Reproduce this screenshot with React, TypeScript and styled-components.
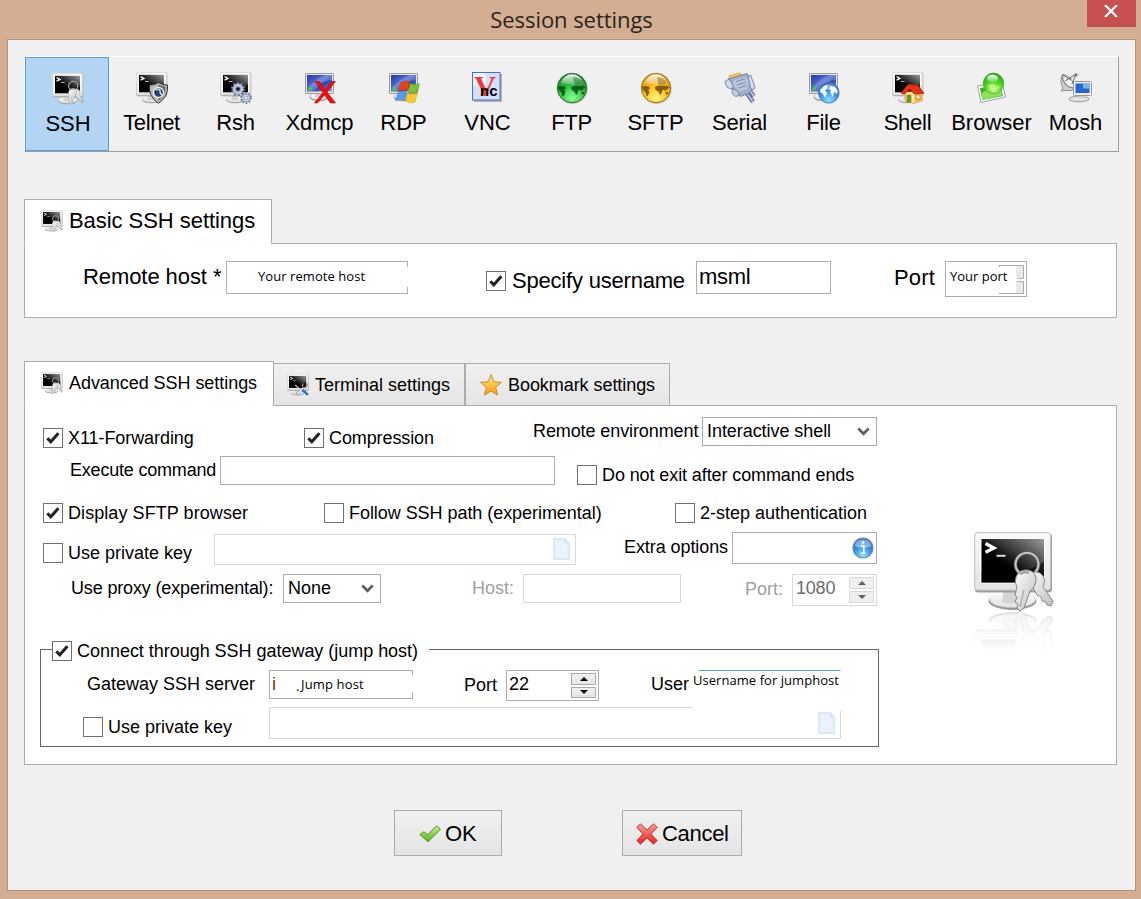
import React from "react";
import styled, { createGlobalStyle, css } from "styled-components";

const GlobalStyle = createGlobalStyle`
  * { box-sizing: border-box; }
  body { margin: 0; background: #d3ae92; }
`;

type Box = { $w?: number; $h?: number; $ml?: number; $mt?: number };

const box = css<Box>`
  flex: none;
  ${(p) => p.$w !== undefined && `width: ${p.$w}px;`}
  ${(p) => p.$h !== undefined && `height: ${p.$h}px;`}
  margin-left: ${(p) => p.$ml ?? 0}px;
  margin-top: ${(p) => p.$mt ?? 0}px;
`;

const Window = styled.div`
  width: 1141px;
  height: 899px;
  padding: 0 5px 8px 7px;
  background: #d3ae92;
  font-family: "Liberation Sans", Arial, sans-serif;
  font-size: 18px;
  color: #000;
  display: flex;
  flex-direction: column;
  overflow: hidden;
`;

const TitleBar = styled.header`
  height: 39px;
  display: flex;
  justify-content: flex-end;
  align-items: flex-start;
`;

const Title = styled.h1`
  margin: 0;
  flex: 1;
  padding-left: 49px;
  font: 400 22px/38px "Open Sans", "Noto Sans", sans-serif;
  letter-spacing: -0.05px;
  text-align: center;
  color: #2b2420;
`;

const CloseButton = styled.button`
  width: 49px;
  height: 27px;
  border: 0;
  padding: 0 2px 5px 0;
  background: #c75050;
  display: flex;
  align-items: center;
  justify-content: center;
`;

const Body = styled.main`
  flex: 1;
  padding: 16px;
  border: 1px solid #b5927a;
  background: #f0f0f0;
`;

const Toolbar = styled.nav`
  width: 1095px;
  height: 96px;
  display: flex;
  border: 1px solid #a0a0a0;
  border-top-color: #fff;
  border-left-color: #fff;
`;

const ToolButton = styled.button<{ $selected?: boolean; $ls?: number }>`
  flex: none;
  width: 84px;
  height: 94px;
  padding: ${(p) => (p.$selected ? "15px 0 0 2px" : "14px 0 0 1px")};
  border: 1px solid ${(p) => (p.$selected ? "#569de5" : "transparent")};
  background: ${(p) => (p.$selected ? "#b3d4f3" : "transparent")};
  display: flex;
  flex-direction: column;
  align-items: center;
  font: 400 22px/28px "Liberation Sans", Arial, sans-serif;
  letter-spacing: ${(p) => p.$ls ?? 0}px;
  color: #000;
  white-space: nowrap;
  svg { flex: none; margin-bottom: 5px; }
`;

const Tabs = styled.div<Box>`
  ${box}
  display: flex;
  align-items: flex-end;
  position: relative;
`;

const Tab = styled.div<Box & { $active?: boolean; $big?: boolean; $pad: string; $ls?: number }>`
  ${box}
  display: flex;
  align-items: flex-start;
  padding: ${(p) => p.$pad};
  border: 1px solid #acacac;
  background: linear-gradient(#f0f0f0, #e5e5e5);
  font-size: ${(p) => (p.$big ? 22 : 18)}px;
  line-height: 24px;
  letter-spacing: ${(p) => p.$ls ?? 0}px;
  white-space: nowrap;
  ${(p) => p.$active && "background: #fff; border-bottom-color: #fff;"}
  svg { flex: none; margin: 1px 6px 0 0; }
`;

const Panel = styled.section<{ $h: number }>`
  width: 1093px;
  height: ${(p) => p.$h}px;
  margin-top: -1px;
  border: 1px solid #acacac;
  background: #fff;
  display: flex;
`;

const Form = styled.div`
  width: 855px;
  flex: none;
`;

const Row = styled.div<Box>`
  ${box}
  display: flex;
  align-items: flex-start;
`;

const Label = styled.span<Box & { $big?: boolean; $ink?: string; $ls?: number }>`
  ${box}
  font-size: ${(p) => (p.$big ? 22 : 18)}px;
  line-height: 24px;
  letter-spacing: ${(p) => p.$ls ?? 0}px;
  color: ${(p) => p.$ink ?? "#000"};
  white-space: nowrap;
`;

const Field = styled.div<Box & { $tone?: "dim" | "hot"; $clear?: boolean }>`
  ${box}
  display: flex;
  align-items: flex-start;
  position: relative;
  border: 1px solid ${(p) => (p.$clear ? "transparent" : p.$tone === "dim" ? "#d9d9d9" : "#abadb3")};
  ${(p) => p.$tone === "hot" && "border-top-color: #569de5;"}
  background: ${(p) => (p.$clear ? "none" : "#fff")};
  white-space: nowrap;
`;

/* White strip that hides part of a field's outline */
const Patch = styled.i<{ $x: number; $y: number; $w: number; $h: number }>`
  position: absolute;
  left: ${(p) => p.$x}px;
  top: ${(p) => p.$y}px;
  width: ${(p) => p.$w}px;
  height: ${(p) => p.$h}px;
  background: #fff;
`;

const Note = styled.span<Box & { $ls?: number }>`
  ${box}
  position: relative;
  font: 400 13px/18px "Open Sans", "Noto Sans", sans-serif;
  letter-spacing: ${(p) => p.$ls ?? 0}px;
  white-space: nowrap;
`;

const Check = styled.span<Box>`
  ${box}
  width: 20px;
  height: 20px;
  border: 1px solid #707070;
  background: #fff;
  display: flex;
  svg { margin: -1px; }
`;

const Spin = styled.span<{ $off?: boolean }>`
  position: absolute;
  right: 2px;
  top: 2px;
  bottom: 2px;
  width: 25px;
  display: flex;
  flex-direction: column;
  gap: 2px;
  span {
    flex: 1;
    display: flex;
    align-items: center;
    justify-content: center;
    border: 1px solid ${(p) => (p.$off ? "#d9d9d9" : "#acacac")};
    background: ${(p) => (p.$off ? "#efefef" : "linear-gradient(#f0f0f0, #e5e5e5)")};
  }
`;

const Group = styled.div`
  width: 839px;
  height: 98px;
  margin: 13px 0 0 15px;
  border: 1px solid #646464;
`;

const Legend = styled.div`
  width: 377px;
  height: 24px;
  margin: -11px 0 0 11px;
  display: flex;
  background: linear-gradient(#fff, #fff) right / 357px 100% no-repeat;
`;

const Actions = styled.footer`
  display: flex;
  gap: 120px;
  margin: 45px 0 0 370px;
`;

const ActionButton = styled.button<{ $w: number; $pad: number; $ls?: number }>`
  width: ${(p) => p.$w}px;
  height: 46px;
  padding: 1px 0 0 ${(p) => p.$pad}px;
  display: flex;
  align-items: center;
  gap: 4px;
  border: 1px solid #acacac;
  background: linear-gradient(#f0f0f0, #e5e5e5);
  font: 400 22px/28px "Liberation Sans", Arial, sans-serif;
  letter-spacing: ${(p) => p.$ls ?? 0}px;
  color: #000;
`;

const Artwork = styled.div`
  margin: 126px 0 0 94px;
`;

const DefsHolder = styled.svg`
  position: absolute;
`;

/* ---------- drawings ---------- */

const SharedDefs = () => (
  <DefsHolder width="0" height="0">
    <defs>
      <linearGradient id="screenHi" x1="0" y1="1" x2="1" y2="0">
        <stop offset=".4" stopColor="#000" />
        <stop offset="1" stopColor="#9a9a9a" />
      </linearGradient>
      <linearGradient id="case" x1="0" y1="0" x2="0" y2="1">
        <stop offset="0" stopColor="#fafafa" />
        <stop offset="1" stopColor="#e2e2e2" />
      </linearGradient>
      <linearGradient id="metal" x1="0" y1="0" x2="1" y2="1">
        <stop offset="0" stopColor="#fff" />
        <stop offset="1" stopColor="#bdbdbd" />
      </linearGradient>
      <linearGradient id="blueScreen" x1="0" y1="0" x2="1" y2="1">
        <stop offset="0" stopColor="#2037a8" />
        <stop offset=".45" stopColor="#5a70cc" />
        <stop offset=".6" stopColor="#2b43a8" />
        <stop offset="1" stopColor="#8ea2e4" />
      </linearGradient>
      <radialGradient id="green" cx=".5" cy=".85" r=".8">
        <stop offset="0" stopColor="#8dff94" />
        <stop offset=".5" stopColor="#35c646" />
        <stop offset="1" stopColor="#12802a" />
      </radialGradient>
      <radialGradient id="gold" cx=".5" cy=".85" r=".8">
        <stop offset="0" stopColor="#fff27a" />
        <stop offset=".5" stopColor="#fdc22a" />
        <stop offset="1" stopColor="#dc9208" />
      </radialGradient>
      <radialGradient id="azure" cx=".5" cy=".85" r=".85">
        <stop offset="0" stopColor="#8fe0ff" />
        <stop offset=".5" stopColor="#3a93e2" />
        <stop offset="1" stopColor="#1c59ae" />
      </radialGradient>
      <radialGradient id="lime" cx=".5" cy=".85" r=".85">
        <stop offset="0" stopColor="#c4ff78" />
        <stop offset=".55" stopColor="#4ad322" />
        <stop offset="1" stopColor="#2ba01a" />
      </radialGradient>
      <linearGradient id="gloss" x1="0" y1="0" x2="0" y2="1">
        <stop offset="0" stopColor="#fff" stopOpacity=".95" />
        <stop offset="1" stopColor="#fff" stopOpacity=".2" />
      </linearGradient>
      <linearGradient id="starFill" x1="0" y1="0" x2="0" y2="1">
        <stop offset="0" stopColor="#ffe98a" />
        <stop offset="1" stopColor="#f99a08" />
      </linearGradient>
      <linearGradient id="okFill" x1="0" y1="0" x2="0" y2="1">
        <stop offset="0" stopColor="#c9f08a" />
        <stop offset="1" stopColor="#57b51c" />
      </linearGradient>
      <linearGradient id="noFill" x1="0" y1="0" x2="0" y2="1">
        <stop offset="0" stopColor="#ff9a94" />
        <stop offset="1" stopColor="#e62222" />
      </linearGradient>
      <linearGradient id="fade" x1="0" y1="0" x2="0" y2="1">
        <stop offset="0" stopColor="#fff" stopOpacity=".3" />
        <stop offset=".6" stopColor="#fff" stopOpacity=".08" />
        <stop offset="1" stopColor="#fff" stopOpacity="0" />
      </linearGradient>
      <mask id="fadeMask" maskUnits="userSpaceOnUse" x="0" y="79" width="84" height="42">
        <rect x="0" y="79" width="84" height="40" fill="url(#fade)" />
      </mask>
      <g id="terminal">
        <ellipse cx="38.5" cy="69" rx="24" ry="9" fill="#9c9c9c" />
        <ellipse cx="38.5" cy="67.5" rx="23" ry="8" fill="url(#case)" />
        <path d="M30 58h14l2 12q-9 3-18 0z" fill="#d4d4d4" />
        <rect x="1" y="1.5" width="77" height="59" rx="3.5" fill="#9d9d9d" />
        <rect x=".7" y=".7" width="76" height="57.5" rx="3" fill="url(#case)" stroke="#bdbdbd" />
        <rect x="6" y="6" width="65" height="45.500" fill="#fff" />
        <rect x="7.5" y="7" width="62.5" height="43.5" fill="url(#screenHi)" />
        <path d="M7.500 50.500V40Q50 44 70 30V50.500z" fill="#000" opacity=".6" />
        <path d="M11.500 11.500l8.500 4.500-8.500 4.300" fill="none" stroke="#fff" strokeWidth="3.200" />
        <path d="M22.500 23.800h9" stroke="#ddd" strokeWidth="2" />
      </g>
      <g id="keys">
        <circle cx="53" cy="32.500" r="11.500" fill="none" stroke="#555" strokeWidth="3.400" />
        <circle cx="53" cy="32.200" r="11.500" fill="none" stroke="#c4c4c4" strokeWidth="2" />
        <path d="M55 44q4-6 11-3 7 5 3 14l10 14-2 5-4-1-1-3-4-1-1-4-4-2-5-9q-6-4-3-10z" fill="url(#metal)" stroke="#8b8b8b" />
        <path d="M42 45q3-8 12-7 9 2 8 11-1 7-6 10l-6 17-4 3-3-3 1-4-3-2 2-5-2-2 2-8q-3-4-1-10z" fill="url(#metal)" stroke="#858585" />
        <path d="M50 58l-4 17" stroke="#999" strokeWidth="1" />
        <path d="M46 42q5-3 9-1" stroke="#999" strokeWidth="2.200" fill="none" />
      </g>
      <g id="bluepc">
        <ellipse cx="15" cy="25" rx="9.500" ry="4.200" fill="#999" />
        <ellipse cx="15" cy="24.300" rx="8.800" ry="3.500" fill="#f0f0f0" />
        <path d="M12 20h6l1 5h-8z" fill="#cfcfcf" />
        <rect x="1.500" y="1.500" width="28" height="20" rx=".6" fill="#e6e6e6" stroke="#9b9b9b" />
        <rect x="3" y="3" width="25" height="16.500" fill="url(#blueScreen)" />
        <path d="M3 19.500Q8 8 22 3h6v5Q18 8 10 19.500z" fill="#9fb0ee" opacity=".4" />
        <path d="M5 14l3 2v2.500H5z" fill="#35d43a" />
      </g>
    </defs>
  </DefsHolder>
);

const Icon = ({ size = 32, view = 32, children }: { size?: number; view?: number; children: React.ReactNode }) => (
  <svg width={size} height={size} viewBox={`0 0 ${view} ${view}`}>
    {children}
  </svg>
);

const KeyTerminal = ({ size = 32 }: { size?: number }) => (
  <Icon size={size} view={80}>
    <use href="#terminal" />
    <use href="#keys" />
  </Icon>
);

const SmallTerminal = () => <use href="#terminal" transform="scale(.4)" />;

const Gear = ({ cx, cy, r, fill, hole }: { cx: number; cy: number; r: number; fill: string; hole: string }) => (
  <g>
    <circle cx={cx} cy={cy} r={r} fill="none" stroke="#68759a" strokeWidth="2.6" strokeDasharray={`${(r * Math.PI) / 10} ${(r * Math.PI) / 10}`} />
    <circle cx={cx} cy={cy} r={r - 0.6} fill={fill} stroke="#7b87a8" strokeWidth=".7" />
    <circle cx={cx} cy={cy} r={r * 0.5} fill="#8f9bbb" />
    <circle cx={cx} cy={cy} r={r * 0.3} fill={hole} />
  </g>
);

const Globe = ({ fill, edge, land }: { fill: string; edge: string; land: string }) => (
  <Icon>
    <circle cx="16.500" cy="17" r="15" fill="#777" opacity=".45" />
    <circle cx="16" cy="16" r="14.700" fill={`url(#${fill})`} stroke={edge} />
    <g fill={land} opacity=".85">
      <path d="M2 14.500l3-.5 4 .5 1 2-2 1.500 1.500 1.500-1.500 4-1.500 1-1-4-3-3z" />
      <path d="M15 15l4-1.500 9 .5 2 2-3 1-1.500 2.500-1.500-2-1.500.8-2 5-2-3.500-3-2z" />
      <path d="M25.500 20.500l2.500-.8.500 2.300-2.500.5z" />
    </g>
    <path d="M4.500 11Q8 2.300 16 2.300T27.500 11Q22 14 16 12.500 10 11.500 4.500 11z" fill="url(#gloss)" />
    <path d="M17 5q7 .5 10 5.500-4 3.500-8.500 2z" fill={land} opacity=".4" />
  </Icon>
);

const tools: { name: string; ls?: number; icon: React.ReactNode }[] = [
  { name: "SSH", icon: <KeyTerminal /> },
  {
    name: "Telnet",
    ls: -0.35,
    icon: (
      <Icon>
        <SmallTerminal />
        <path d="M22.500 10.500q4.500 3 9 2.500 1 12-9 18.300-10-6.300-9-18.300 4.500.5 9-2.500z" fill="#b9b9b9" stroke="#333" />
        <path d="M22.500 12.500q3.500 2 7 2.200 0 9-7 14.300z" fill="#6a6a6a" />
        <circle cx="22.500" cy="20.500" r="5" fill="#263f66" stroke="#eee" strokeWidth="1.300" />
        <path d="M20 18q4-2 4 1t2 4" stroke="#c8d8ef" strokeWidth="1.600" fill="none" />
      </Icon>
    ),
  },
  {
    name: "Rsh",
    ls: -0.2,
    icon: (
      <Icon>
        <SmallTerminal />
        <Gear cx={18} cy={17} r={6} fill="#c4cbe0" hole="#111" />
        <Gear cx={26} cy={26} r={4.6} fill="#cfd6ea" hole="#f4f4f4" />
      </Icon>
    ),
  },
  {
    name: "Xdmcp",
    ls: -0.1,
    icon: (
      <Icon>
        <use href="#bluepc" />
        <path d="M11 9.500h4.500l5.500 8 7-8h3.500l-8.500 10.500 8.500 11h-5l-6-8-7 8h-3l8.500-10.500z" fill="#f20d0d" stroke="#b50000" strokeWidth=".6" />
      </Icon>
    ),
  },
  {
    name: "RDP",
    icon: (
      <Icon>
        <use href="#bluepc" />
        <path d="M12.500 11q5-3.500 9-.8l-2 8.500q-4-2-9.300.8z" fill="#e5401f" stroke="#b03010" strokeWidth=".4" />
        <path d="M22 11.500q4.500 2 9.500.2l-2 8.800q-5 2-9.500-.3z" fill="#7fc032" stroke="#4e8a18" strokeWidth=".4" />
        <path d="M10 20.500q4.500-2.500 9-.4l-2 8.400q-4-2.500-9.500.3z" fill="#5a9be6" stroke="#2e66b5" strokeWidth=".4" />
        <path d="M19.700 21q4 2.500 9.500.7l-2.200 8.400q-5 2-9.300-1z" fill="#fdc92b" stroke="#c89010" strokeWidth=".4" />
      </Icon>
    ),
  },
  {
    name: "VNC",
    icon: (
      <Icon>
        <rect x="2" y="2" width="28" height="28" fill="#888" opacity=".6" />
        <rect x=".5" y=".5" width="27.500" height="27.500" fill="#d3e0f8" stroke="#4a6fc0" />
        <path d="M1 1h13v13H1z" fill="#fff" opacity=".6" />
        <text x="2" y="23.500" fontFamily="Liberation Serif" fontWeight="700" fontSize="30" fill="#ee3b40" textLength="22" lengthAdjust="spacingAndGlyphs">V</text>
        <text x="8" y="23.500" fontFamily="Liberation Sans" fontWeight="700" fontSize="15" fill="#000" textLength="17.500" lengthAdjust="spacingAndGlyphs">nc</text>
      </Icon>
    ),
  },
  { name: "FTP", ls: -0.3, icon: <Globe fill="green" edge="#2e6e34" land="#064f14" /> },
  { name: "SFTP", icon: <Globe fill="gold" edge="#9a7420" land="#7a4c00" /> },
  {
    name: "Serial",
    ls: -0.2,
    icon: (
      <Icon>
        <path d="M5 4L16 .8l2 2L6 6.500z" fill="#f9c870" stroke="#e09a30" strokeWidth=".7" />
        <path d="M22 20l7 10M25 18l5 6" stroke="#5a6a94" strokeWidth="4.200" />
        <path d="M22 20l7 10M25 18l5 6" stroke="#b8c3de" strokeWidth="2" />
        <path d="M4 7l19-5.500 7 12-3.500 7-10 4-8-7z" fill="#a3aec8" stroke="#66749a" strokeWidth=".8" />
        <path d="M9 8.500l13-4 3 5.500-2 7-8 3-6-7z" fill="#b9c4dc" />
        <path d="M12 9.500l9-2.800M13 13l9-2.800M15 16l7-2.300" stroke="#8492b6" strokeWidth="1.200" />
        <path d="M.8 9.500l4.500-2.500 4 7-2 3-4-1.500z" fill="#d3daeb" stroke="#66749a" strokeWidth=".8" />
        <path d="M8.500 17l5 1.500 2 5-4 1-3.500-3z" fill="#c3cce0" stroke="#66749a" strokeWidth=".8" />
        <path d="M24 4.500l2.500-1.500 4.500 12-1.500 3-3-2z" fill="#d3daeb" stroke="#66749a" strokeWidth=".8" />
      </Icon>
    ),
  },
  {
    name: "File",
    ls: -0.2,
    icon: (
      <Icon>
        <use href="#bluepc" />
        <circle cx="20.800" cy="20.800" r="10.300" fill="url(#azure)" stroke="#4a81bc" />
        <g fill="#eef8ff">
          <path d="M12 18l4-4 4-1-1 4-2 1 2 3-2 5-2-4-3-2z" />
          <path d="M22 14l5 1 3 4-1 3-3-2-1 5-3-5 1-2-2-1z" />
        </g>
        <path d="M13 17q2-5 8-5t8 5q-8 2-16 0z" fill="#fff" opacity=".35" />
      </Icon>
    ),
  },
  {
    name: "Shell",
    ls: -0.25,
    icon: (
      <Icon>
        <SmallTerminal />
        <path d="M13 20l16-.5 1.500 9-9 3-8-2.500z" fill="#ffe9a6" stroke="#d98a28" strokeWidth=".8" />
        <path d="M22.500 20l7.500-1 .5 9-8 3z" fill="#f9b654" />
        <path d="M16 12.500l10 .8 6 8-10 .5-4-4.500-6 5-3-1.500z" fill="#e53517" stroke="#a81e08" strokeWidth=".8" />
        <rect x="15" y="23" width="4" height="7" fill="#4da02a" stroke="#b26a12" strokeWidth=".6" />
        <rect x="24" y="23" width="4" height="4" fill="#fff6d4" stroke="#c26a12" strokeWidth=".7" />
      </Icon>
    ),
  },
  {
    name: "Browser",
    icon: (
      <Icon>
        <path d="M1.500 14L26 10l3.500 15L5 30.500z" fill="#f7f7f7" stroke="#9a9a9a" strokeWidth=".9" />
        <path d="M4 16l20-3 3 11-20.500 4z" fill="#3fae28" />
        <path d="M5 22q9-8 20-3l1.500 4.500L6.500 28z" fill="#8be05c" />
        <circle cx="17.500" cy="11.300" r="10.200" fill="url(#lime)" stroke="#4aa52c" strokeWidth=".8" />
        <ellipse cx="16.500" cy="6.500" rx="5.500" ry="3.800" fill="url(#gloss)" />
        <path d="M12 13q4-3 7 0t6-1q-2 7-8 6-5-1-5-5z" fill="#eaffb8" opacity=".45" />
      </Icon>
    ),
  },
  {
    name: "Mosh",
    ls: -0.1,
    icon: (
      <Icon>
        <path d="M2.500 2.500Q1 15 15 16.500q-3 3-9 2L1 19l2-3Q-1 9 2.500 2.500z" fill="#cfcfcf" stroke="#777" strokeWidth=".8" />
        <path d="M2.500 2.500Q12 3 15 16.500 2 14 2.500 2.500z" fill="#f2f2f2" stroke="#777" strokeWidth=".8" />
        <path d="M5 9l11-7M16 2l-4 10M3 3l8 5" stroke="#555" strokeWidth=".9" fill="none" />
        <circle cx="16" cy="3" r="1.800" fill="#888" />
        <ellipse cx="19" cy="27" rx="10" ry="2.800" fill="#e4e4e4" stroke="#888" strokeWidth=".8" />
        <path d="M19 22h7v4h-7z" fill="#ccc" />
        <rect x="13.500" y="9.500" width="18" height="14" rx="1" fill="#ededed" stroke="#999" />
        <rect x="15.500" y="11.500" width="14" height="9.500" fill="#2466cd" />
        <path d="M23 11.500h6.500v5H23z" fill="#7db5f2" />
      </Icon>
    ),
  },
];

const ToolsTerminal = () => (
  <Icon size={22} view={80}>
    <use href="#terminal" />
    <path d="M60 34l-6 9 6 7 10-5 4-9-2 12-8 5-22 22-7-1 1-7 22-20" fill="#e8e8e8" stroke="#777" strokeWidth="2" />
    <path d="M30 40l26 24" stroke="#ccc" strokeWidth="4" />
    <path d="M56 58l20 18" stroke="#1f73c4" strokeWidth="9" />
  </Icon>
);

const Star = () => (
  <Icon size={22} view={22}>
    <path d="M11 .6l2.900 7.200 7.500.6-5.700 5 1.900 7.700L11 17.100l-6.600 4 1.900-7.700L.6 8.400 8.100 7.800z" fill="url(#starFill)" stroke="#bd8430" strokeWidth=".9" strokeLinejoin="round" />
  </Icon>
);

const Tick = () => (
  <svg width="20" height="20" viewBox="0 0 20 20">
    <path d="M4.300 10.200l3.500 3.600 7.600-8.600" fill="none" stroke="#222" strokeWidth="3" />
  </svg>
);

const CheckBox = ({ on, ml, mt }: { on?: boolean; ml: number; mt: number }) => (
  <Check $ml={ml} $mt={mt}>{on && <Tick />}</Check>
);

const Chevron = styled.svg`
  position: absolute;
  right: 6px;
  top: 9px;
`;

const Arrow = () => (
  <Chevron width="13" height="10" viewBox="0 0 13 10">
    <path d="M1.300 1.500l5.200 5.300 5.200-5.300" fill="none" stroke="#606060" strokeWidth="2.700" />
  </Chevron>
);

const SpinButtons = ({ off }: { off?: boolean }) => {
  const color = off ? "#606060" : "#000";
  return (
    <Spin $off={off}>
      <span><svg width="8" height="4"><path d="M0 4l4-4 4 4z" fill={color} /></svg></span>
      <span><svg width="8" height="4"><path d="M0 0l4 4 4-4z" fill={color} /></svg></span>
    </Spin>
  );
};

const FieldIcon = styled.svg<{ $r: number; $t: number }>`
  position: absolute;
  right: ${(p) => p.$r}px;
  top: ${(p) => p.$t}px;
`;

const DocIcon = ({ t }: { t: number }) => (
  <FieldIcon $r={5} $t={t} width="17" height="22" viewBox="0 0 17 22">
    <path d="M.8.8h11l4.400 4.400v16H.8z" fill="#e3effb" stroke="#d6e6f6" strokeWidth="1.400" />
    <path d="M2.500 2.500h8.500l3.500 3.500v13.500h-12z" fill="#eaf3fd" />
    <path d="M11.500 1v4.500h4.500" fill="#d2e4f6" />
  </FieldIcon>
);

const InfoIcon = () => (
  <FieldIcon $r={2} $t={4} width="22" height="22" viewBox="0 0 22 22">
    <circle cx="11" cy="11" r="10" fill="url(#azure)" stroke="#7288ac" strokeWidth="1.200" />
    <path d="M2.500 9Q4 2.300 11 2.300T19.500 9Q11 13 2.500 9z" fill="#fff" opacity=".4" />
    <path d="M9 8.700h2.800v7M8.800 16h4.600" fill="none" stroke="#fff" strokeWidth="1.500" />
    <circle cx="11" cy="5.500" r="1.300" fill="#fff" />
  </FieldIcon>
);

/* Remains of the spin buttons beside the port note */
const SpinRemains = styled.svg`
  position: absolute;
  right: 1px;
  top: 2px;
`;

export default function App() {
  return (
    <Window>
      <GlobalStyle />
      <SharedDefs />
      <TitleBar>
        <Title>Session settings</Title>
        <CloseButton aria-label="Close">
          <svg width="14" height="12" viewBox="0 0 14 12">
            <path d="M1 0l12 12M13 0L1 12" stroke="#fff" strokeWidth="2.200" />
          </svg>
        </CloseButton>
      </TitleBar>
      <Body>
        <Toolbar>
          {tools.map((tool, i) => (
            <ToolButton key={tool.name} $selected={i === 0} $ls={tool.ls}>
              {tool.icon}
              {tool.name}
            </ToolButton>
          ))}
        </Toolbar>

        <Tabs $h={45} $mt={47}>
          <Tab $active $big $w={248} $h={45} $pad="9px 0 0 16px" $ls={-0.05}>
            <KeyTerminal size={22} />
            Basic SSH settings
          </Tab>
        </Tabs>
        <Panel $h={75}>
          <Row>
            <Label $big $ml={58} $mt={21} $w={143} $ls={-0.08}>Remote host *</Label>
            <Field $w={182} $h={33} $mt={17}>
              <Note $ml={31} $mt={5} $ls={0.06}>Your remote host</Note>
              <Patch $x={180} $y={5} $w={2} $h={20} />
            </Field>
            <CheckBox on ml={78} mt={27} />
            <Label $big $ml={6} $mt={25} $w={184} $ls={-0.2}>Specify username</Label>
            <Field $w={135} $h={33} $mt={17}>
              <Label $big $ml={2} $mt={3} $ls={-0.3}>msml</Label>
            </Field>
            <Label $big $ml={63} $mt={22} $w={51} $ls={0.2}>Port</Label>
            <Field $w={82} $h={36} $mt={17}>
              <SpinRemains width="26" height="31" viewBox="0 0 26 31">
                <path d="M17 1h8v13h-8zM17 17h8v12h-8z" fill="#eaeaea" />
                <path d="M0 1.500h24.500v13h-6M18.500 17.500h6v12H0M.5 1v2" fill="none" stroke="#acacac" />
              </SpinRemains>
              <Note $ml={4} $mt={5}>Your port</Note>
            </Field>
          </Row>
        </Panel>

        <Tabs $h={45} $mt={43}>
          <Tab $active $w={250} $h={45} $pad="9px 0 0 16px" $ls={-0.05}>
            <KeyTerminal size={22} />
            Advanced SSH settings
          </Tab>
          <Tab $w={192} $h={43} $ml={-1} $pad="9px 0 0 13px">
            <ToolsTerminal />
            Terminal settings
          </Tab>
          <Tab $w={205} $h={43} $pad="9px 0 0 14px" $ls={-0.06}>
            <Star />
            Bookmark settings
          </Tab>
        </Tabs>
        <Panel $h={360}>
          <Form>
            <Row $h={46}>
              <CheckBox on ml={18} mt={22} />
              <Label $ml={5} $mt={20} $w={236} $ls={-0.07}>X11-Forwarding</Label>
              <CheckBox on ml={0} mt={22} />
              <Label $ml={5} $mt={20} $w={204} $ls={-0.1}>Compression</Label>
              <Label $mt={13} $w={169} $ls={-0.1}>Remote environment</Label>
              <Field $w={175} $h={29} $mt={11}>
                <Label $ml={4} $mt={1} $ls={-0.06}>Interactive shell</Label>
                <Arrow />
              </Field>
            </Row>
            <Row $h={45}>
              <Label $ml={45} $mt={6} $w={150} $ls={-0.2}>Execute command</Label>
              <Field $w={335} $h={29} $mt={4} />
              <CheckBox ml={22} mt={13} />
              <Label $ml={5} $mt={11} $ls={-0.1}>Do not exit after command ends</Label>
            </Row>
            <Row $h={33}>
              <CheckBox on ml={18} mt={6} />
              <Label $ml={5} $mt={4} $w={256} $ls={0.07}>Display SFTP browser</Label>
              <CheckBox ml={0} mt={6} />
              <Label $ml={5} $mt={4} $w={326} $ls={-0.05}>Follow SSH path (experimental)</Label>
              <CheckBox ml={0} mt={6} />
              <Label $ml={5} $mt={4}>2-step authentication</Label>
            </Row>
            <Row $h={40}>
              <CheckBox ml={18} mt={13} />
              <Label $ml={5} $mt={11} $w={146}>Use private key</Label>
              <Field $tone="dim" $w={362} $h={31} $mt={4}>
                <DocIcon t={3} />
              </Field>
              <Label $ml={48} $mt={5} $w={108} $ls={-0.08}>Extra options</Label>
              <Field $w={145} $h={32} $mt={2}>
                <InfoIcon />
              </Field>
            </Row>
            <Row $h={66}>
              <Label $ml={46} $mt={6} $w={212} $ls={-0.15}>Use proxy (experimental):</Label>
              <Field $w={98} $h={29} $mt={4}>
                <Label $ml={4} $mt={1}>None</Label>
                <Arrow />
              </Field>
              <Label $ink="#a0a0a0" $ml={91} $mt={6} $w={51}>Host:</Label>
              <Field $tone="dim" $w={158} $h={29} $mt={4} />
              <Label $ink="#a0a0a0" $ml={64} $mt={7} $w={47}>Port:</Label>
              <Field $tone="dim" $w={85} $h={32} $mt={4}>
                <Label $ink="#6d6d6d" $ml={3} $mt={1} $ls={-0.2}>1080</Label>
                <SpinButtons off />
              </Field>
            </Row>
            <Group>
              <Legend>
                <CheckBox on ml={0} mt={2} />
                <Label $ml={5} $ls={-0.03}>Connect through SSH gateway (jump host)</Label>
              </Legend>
              <Row $h={39}>
                <Label $ml={46} $mt={9} $w={182}>Gateway SSH server</Label>
                <Field $w={144} $h={29} $mt={7}>
                  <Label $ink="#5c4224" $ml={2} $mt={1} $w={24}>i</Label>
                  <Note $mt={6} $w={5}>.</Note>
                  <Note $mt={4} $ls={0.15}>Jump host</Note>
                  <Patch $x={142} $y={4} $w={2} $h={17} />
                </Field>
                <Label $ml={51} $mt={10} $w={42}>Port</Label>
                <Field $w={93} $h={31} $mt={7}>
                  <Label $ml={2} $mt={1}>22</Label>
                  <SpinButtons />
                </Field>
                <Label $ml={52} $mt={9} $w={47}>User</Label>
                <Field $w={143} $h={29} $mt={7} $clear $tone="hot">
                  <Note $ml={-6} $mt={0} $ls={0.05}>Username for jumphost</Note>
                </Field>
              </Row>
              <Row>
                <CheckBox ml={42} mt={15} />
                <Label $ml={5} $mt={13} $w={161}>Use private key</Label>
                <Field $tone="dim" $w={572} $h={32} $mt={5}>
                  <DocIcon t={4} />
                  <Patch $x={423} $y={-1} $w={148} $h={4} />
                </Field>
              </Row>
            </Group>
          </Form>
          <Artwork>
            <svg width="84" height="122" viewBox="0 0 84 122">
              <use href="#terminal" />
              <use href="#keys" />
              <g mask="url(#fadeMask)">
                <g transform="translate(0 158) scale(1 -1)">
                  <use href="#terminal" />
                  <use href="#keys" />
                </g>
              </g>
            </svg>
          </Artwork>
        </Panel>

        <Actions>
          <ActionButton $w={108} $pad={24}>
            <svg width="22" height="18" viewBox="0 0 22 18">
              <path d="M.8 9.500l4-2.800 4 3L17.500.8l4 3.400L9 16.800z" fill="url(#okFill)" stroke="#5c8f3c" strokeLinejoin="round" />
            </svg>
            OK
          </ActionButton>
          <ActionButton $w={120} $pad={13} $ls={-0.3}>
            <svg width="22" height="22" viewBox="0 0 22 22">
              <path d="M4.500.8L11 7l6.500-6.200 3.700 3.700L15 11l6.200 6.500-3.700 3.700L11 15l-6.500 6.200-3.700-3.700L7 11 .8 4.500z" fill="url(#noFill)" stroke="#b04040" strokeLinejoin="round" />
            </svg>
            Cancel
          </ActionButton>
        </Actions>
      </Body>
    </Window>
  );
}
